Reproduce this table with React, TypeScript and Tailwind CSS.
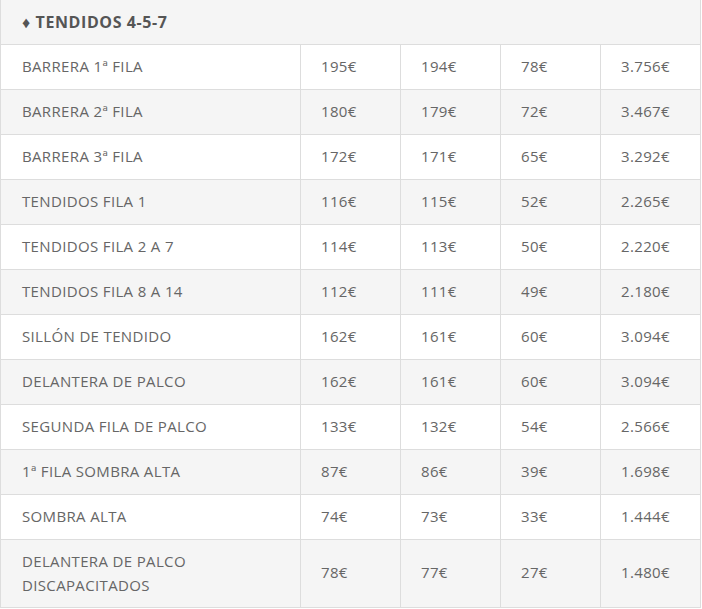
import React from "react";

const rows: [string[], string, string, string, string][] = [
  [["BARRERA 1ª FILA"], "195€", "194€", "78€", "3.756€"],
  [["BARRERA 2ª FILA"], "180€", "179€", "72€", "3.467€"],
  [["BARRERA 3ª FILA"], "172€", "171€", "65€", "3.292€"],
  [["TENDIDOS FILA 1"], "116€", "115€", "52€", "2.265€"],
  [["TENDIDOS FILA 2 A 7"], "114€", "113€", "50€", "2.220€"],
  [["TENDIDOS FILA 8 A 14"], "112€", "111€", "49€", "2.180€"],
  [["SILLÓN DE TENDIDO"], "162€", "161€", "60€", "3.094€"],
  [["DELANTERA DE PALCO"], "162€", "161€", "60€", "3.094€"],
  [["SEGUNDA FILA DE PALCO"], "133€", "132€", "54€", "2.566€"],
  [["1ª FILA SOMBRA ALTA"], "87€", "86€", "39€", "1.698€"],
  [["SOMBRA ALTA"], "74€", "73€", "33€", "1.444€"],
  [["DELANTERA DE PALCO", "DISCAPACITADOS"], "78€", "77€", "27€", "1.480€"],
];

export default function App() {
  return (
    <div
      className="w-[702px] h-[609px] bg-white text-[15px] text-[#666] tracking-[0.35px]"
      style={{ fontFamily: '"Open Sans", "Liberation Sans", sans-serif' }}
    >
      <div className="w-[701px] border-l border-r border-b border-[#dddddd]">
        <div className="h-[45px] bg-[#f5f5f5] border-b border-[#dddddd] flex items-center pl-[21px] font-bold text-[#555] text-[16px] tracking-[0.6px]">
          ♦ TENDIDOS 4-5-7
        </div>
        {rows.map((r, i) => {
          const bg = i % 2 === 1 ? "bg-[#f5f5f5]" : "bg-white";
          const last = i === rows.length - 1;
          return (
            <div
              key={i}
              className={`grid grid-cols-[299px_100px_100px_100px_100px] ${bg} ${
                last ? "h-[67px]" : "h-[45px] border-b border-[#dddddd]"
              }`}
            >
              <div className="flex flex-col justify-center pl-[21px] pb-[2px] leading-[24px]">
                {r[0].map((t, j) => (
                  <span key={j}>{t}</span>
                ))}
              </div>
              {[r[1], r[2], r[3], r[4]].map((v, j) => (
                <div
                  key={j}
                  className="border-l border-[#dddddd] flex items-center pl-[20px] pb-[2px]"
                >
                  {v}
                </div>
              ))}
            </div>
          );
        })}
      </div>
    </div>
  );
}
